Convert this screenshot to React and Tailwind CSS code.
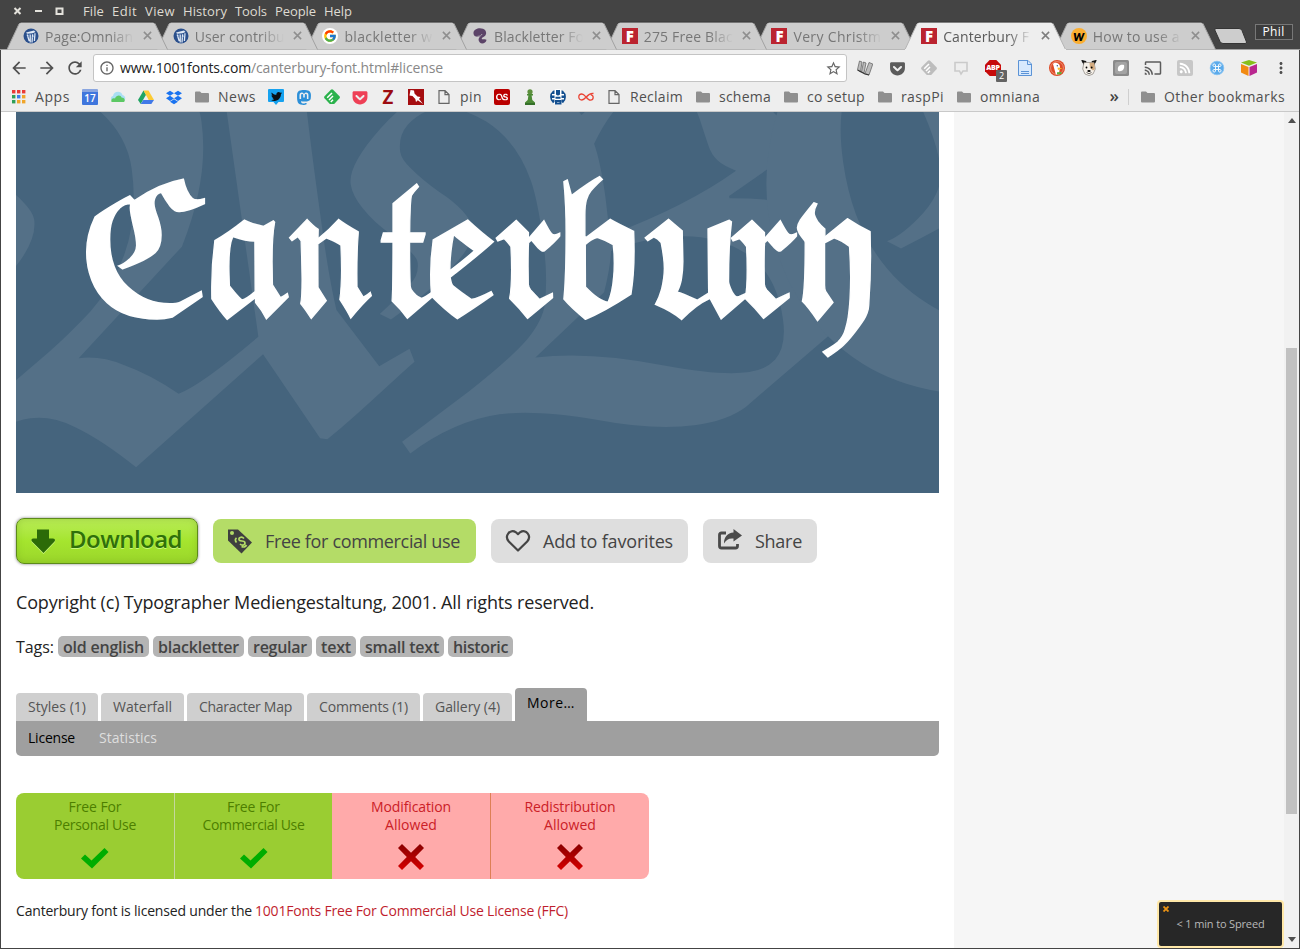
import React, { useLayoutEffect, useRef } from "react";
import { FaDropbox, FaMastodon, FaGetPocket, FaTwitter, FaLastfm, FaRss } from "react-icons/fa";
import { FcGoogle } from "react-icons/fc";
import {
  MdArrowBack,
  MdArrowForward,
  MdRefresh,
  MdInfoOutline,
  MdStarBorder,
  MdCast,
  MdMoreVert,
} from "react-icons/md";

/* Label whose letter spacing is adjusted so that it fills an exact width. */
function Label({ w, className = "", children }) {
  const ref = useRef(null);
  useLayoutEffect(() => {
    const el = ref.current;
    const inner = el.firstChild;
    inner.style.letterSpacing = "0px";
    const natural = inner.getBoundingClientRect().width;
    inner.style.letterSpacing = `${(w - natural) / inner.textContent.length}px`;
    el.style.width = `${w}px`;
  }, [w, children]);
  return (
    <span ref={ref} className={`inline-block shrink-0 whitespace-nowrap ${className}`}>
      <span>{children}</span>
    </span>
  );
}

/* ---------- favicons ---------- */

const Wikisource = () => (
  <svg viewBox="0 0 16 16" className="size-4">
    <circle cx="8" cy="8" r="7.500" fill="#2a4f8c" />
    <path d="M3 4.500 L7 3.600 L11 2.500 L12.500 4 L9.500 5.200 L4 5.800 Z" fill="#dfe9f5" />
    <path d="M4.200 6.500 L6.200 13 M7.200 6.500 V14.600 M9.600 6.200 L9 14.500 M12 5.200 L11.400 13" stroke="#dfe9f5" strokeWidth="1.300" fill="none" />
    <path d="M4.500 9 L6 6.500 M9.500 10 L11.500 6.500" stroke="#8fb0dc" strokeWidth=".8" />
  </svg>
);
const Google = () => (
  <span className="flex size-4 items-center justify-center rounded-full bg-white">
    <FcGoogle size={14} />
  </span>
);
const Purple = () => (
  <svg viewBox="0 0 16 16" className="size-4">
    <path d="M1.500 4.500 C2 1 7 -.8 11 .8 C15 2.500 14.800 6.500 12.500 8.300 C10.500 9.600 9.200 10 10 11.200 C11.500 11.500 13.500 10.800 14.500 12 C14 15 10 16.500 7.800 14.500 C5.500 12 6.800 9.600 8.500 8.200 C5 9.500 1 8.500 1.500 4.500 Z" fill="#5c4468" />
    <path d="M5.500 8.300 C8 8.300 9.500 7.500 10 6" stroke="#cdcdcd" strokeWidth=".7" fill="none" />
  </svg>
);
const FontsF = () => (
  <span className="flex size-4 items-center justify-center bg-[#bb2430] font-['Open_Sans',sans-serif] text-[15px] leading-4 font-extrabold text-white">
    F
  </span>
);
const Wiki = () => (
  <span className="flex size-4 items-center justify-center rounded-full bg-[#fbae30] pb-0.5 font-['Lato',sans-serif] text-[15px] leading-4 font-black text-black italic">
    w
  </span>
);

/* ---------- browser tabs ---------- */

const tabs = [
  { icon: <Wikisource />, title: "Page:Omnian", w: 88, z: "z-[8]" },
  { icon: <Wikisource />, title: "User contribu", w: 90, z: "z-[7]" },
  { icon: <Google />, title: "blackletter w", w: 88, z: "z-[6]" },
  { icon: <Purple />, title: "Blackletter Fo", w: 90, z: "z-[5]" },
  { icon: <FontsF />, title: "275 Free Blac", w: 89, z: "z-[4]" },
  { icon: <FontsF />, title: "Very Christm", w: 88, z: "z-[3]" },
  { icon: <FontsF />, title: "Canterbury F", w: 86, z: "z-[9]", active: true },
  { icon: <Wiki />, title: "How to use a", w: 87, z: "z-[1]" },
];

function Tab({ icon, title, w, z, active }) {
  return (
    <div className={`relative h-7 w-[149.700px] shrink-0 ${z}`}>
      <svg viewBox="0 0 162 28" className="absolute top-0 left-0 h-7 w-[162px] overflow-visible">
        <path
          d="M0 27.5 L12 2 Q13 .5 14.5 .5 H146 Q147.500 .5 148.200 2 L160.500 27.500"
          fill={active ? "#eeeeee" : "#cdcdcd"}
          stroke={active ? "#b5b5b5" : "#a2a2a2"}
        />
        <path d="M12.500 1 Q13 0 14.500 0 H146 L148 1" fill="none" stroke="#343434" strokeWidth=".8" />
        <path d={active ? "M0 27.800 H161" : ""} stroke="#eeeeee" strokeWidth="1.500" />
      </svg>
      <div className="relative flex h-[27px] items-center pl-4">
        {icon}
        <div className="ml-[6px] w-[90px] [mask-image:linear-gradient(to_right,black_72%,transparent_99%)]">
          <Label w={w} className={`text-[14px] leading-5 ${active ? "text-[#5a5a5a]" : "text-[#777]"}`}>
            {title}
          </Label>
        </div>
        <svg viewBox="0 0 10 10" className="ml-[8px] size-[9px]">
          <path d="M1 1 L9 9 M9 1 L1 9" stroke={active ? "#7e7e7e" : "#8f8f8f"} strokeWidth="1.700" />
        </svg>
      </div>
    </div>
  );
}

/* ---------- bookmark icons ---------- */

const Apps = () => (
  <svg viewBox="0 0 16 16" className="size-4">
    {["#ea3b36", "#ea3b36", "#ea3b36", "#2f9f58", "#3b7ded", "#f0a52a", "#2f9f58", "#f0a52a", "#f0a52a"].map((c, i) => (
      <rect key={i} x={1 + (i % 3) * 5} y={1 + Math.floor(i / 3) * 5} width="3.400" height="3.400" fill={c} />
    ))}
  </svg>
);
const Calendar = () => (
  <span className="flex size-4 items-end justify-center rounded-[1px] border-t-[3px] border-[#8aa6e0] bg-[#3f76dd] text-[10px] leading-[13px] font-semibold text-white">
    17
  </span>
);
const Cloud = () => (
  <svg viewBox="0 0 16 16" className="size-4">
    <path d="M3 12 C0 11 .5 7.500 3 7 C3.500 2 11 1 12.500 6 C16 7 16 11 13.500 12 Z" fill="#a9dff3" />
    <path d="M1.500 13 C.5 10 3 8.500 5 9.500 C6.500 5.500 11 6 11.500 8.500 C15 8.500 15.500 12 14 13 Z" fill="#5cc864" />
  </svg>
);
const Drive = () => (
  <svg viewBox="0 0 16 16" className="size-4">
    <path d="M5.500 1.500 L0 11 L2.700 15 L8 5.800 Z" fill="#1fa463" />
    <path d="M5.500 1.500 H10.500 L16 11 H10.700 Z" fill="#fccb34" />
    <path d="M5.300 11 H16 L13.300 15 H2.700 Z" fill="#4179e8" />
  </svg>
);
const Folder = () => (
  <svg viewBox="0 0 16 16" className="size-4">
    <path d="M1 3.500 Q1 2.500 2 2.500 H6 L7.500 4 H14 Q15 4 15 5 V12.500 Q15 13.500 14 13.500 H2 Q1 13.500 1 12.500 Z" fill="#8f8f8f" />
  </svg>
);
const Twitter = () => (
  <span className="relative flex size-4 items-start justify-center pt-[1.500px]">
    <svg viewBox="0 0 16 16" className="absolute inset-0 size-4">
      <path d="M1 0 H15 Q16 0 16 1 V12 Q16 13 15 13 H10.500 L8 16 L5.500 13 H1 Q0 13 0 12 V1 Q0 0 1 0 Z" fill="#16a2ef" />
    </svg>
    <FaTwitter size={11} color="#0a0f14" className="relative" />
  </span>
);
const FeedMark = ({ fill, size = 16 }) => (
  <svg viewBox="0 0 16 16" width={size} height={size}>
    <path d="M6.900 .7 Q8 -.3 9.100 .7 L15.500 7.300 Q16.400 8.300 15.500 9.300 L10.200 15 H5.800 L.5 9.300 Q-.4 8.300 .5 7.300 Z" fill={fill} />
    <path d="M3.200 8.800 L8 4 M5 11 L9 7 M6.800 13 L9 10.800" stroke="#fff" strokeWidth="1.500" />
  </svg>
);
const RedPin = () => (
  <svg viewBox="0 0 16 16" className="size-4">
    <rect width="16" height="16" fill="#a50d10" />
    <path d="M2.500 1 L6 1.500 L6.500 4.500 L9.500 7.500 L12.500 8 L11 10 L15 15 L9.800 11.200 L8 13 L7.300 10 L4.500 7 L1.500 6.500 Z" fill="#fff" />
  </svg>
);
const Zed = () => (
  <span className="flex size-4 items-center justify-center font-['Lato',sans-serif] text-[18px] leading-4 font-black text-[#9c0b10]">Z</span>
);
const Doc = () => (
  <svg viewBox="0 0 16 16" className="size-4" fill="none" stroke="#666" strokeWidth="1.200">
    <path d="M3 1.600 H9 L13 5.600 V14.400 H3 Z M9 1.600 V5.600 H13" />
  </svg>
);
const Last = () => (
  <span className="flex size-4 items-center justify-center rounded-[2px] bg-[#ba0000] text-white">
    <FaLastfm size={12} />
  </span>
);
const Chess = () => (
  <svg viewBox="0 0 16 16" className="size-4">
    <circle cx="8" cy="2.800" r="2.600" fill="#5c8f3c" />
    <path d="M5 5 H11 V6.500 H9.600 L10.300 11 L13 13.500 V16 H3 V13.500 L5.700 11 L6.400 6.500 H5 Z" fill="#4c8a36" />
    <path d="M3 14 H13 V16 H3 Z" fill="#35702a" />
  </svg>
);
const BlueDisc = () => (
  <svg viewBox="0 0 16 16" className="size-4">
    <circle cx="8" cy="8" r="8" fill="#fff" />
    <path d="M3 1.800 A8 8 0 0 0 3 14.200 L4.500 13 V10.500 H2 V9 H4.500 V6.500 H2 V5 H4.500 V1.200 Z M13 1.800 A8 8 0 0 1 13 14.200 L11.500 13 V10.500 H14 V9 H11.500 V6.500 H14 V5 H11.500 V1.200 Z" fill="#134f8f" />
    <path d="M5.500 8.800 H10.500 M6 12 H10.500 V14.500 H6 Z" fill="none" stroke="#134f8f" strokeWidth="2" />
    <path d="M6 1 H10 V5.500 Q8 7.500 6 5.500 Z" fill="#134f8f" />
  </svg>
);
const Loop = () => (
  <svg viewBox="0 0 16 16" className="size-4">
    <path d="M15.500 4.500 C12 4 10 6 8 8.300 C6.500 10 5.500 11 3.800 11 C-.2 11 -.2 5 3.800 5 C5.500 5 6.500 6.300 8 8 C9.500 9.800 10.700 11.200 12.500 11.200 C16 11.200 16 6 12.800 5.800" fill="none" stroke="#ea4435" strokeWidth="1.300" />
  </svg>
);

const bookmarks = [
  [<Apps />, "Apps", 35],
  [<Calendar />],
  [<Cloud />],
  [<Drive />],
  [<FaDropbox size={17} color="#1a73f0" />],
  [<Folder />, "News", 38],
  [<Twitter />],
  [<FaMastodon size={17} color="#2b8fd8" />],
  [<FeedMark fill="#2bb24c" />],
  [<FaGetPocket size={17} color="#ee4056" />],
  [<Zed />],
  [<RedPin />],
  [<Doc />, "pin", 22],
  [<Last />],
  [<Chess />],
  [<BlueDisc />],
  [<Loop />],
  [<Doc />, "Reclaim", 53],
  [<Folder />, "schema", 52],
  [<Folder />, "co setup", 58],
  [<Folder />, "raspPi", 43],
  [<Folder />, "omniana", 60],
];

function Bookmark({ icon, text, w }) {
  return (
    <div className="flex shrink-0 items-center gap-2">
      <span className="flex size-4 items-center justify-center">{icon}</span>
      {text && (
        <Label w={w} className="text-[14px] leading-5 text-[#505050]">
          {text}
        </Label>
      )}
    </div>
  );
}

/* ---------- extension icons ---------- */

const extensions = [
  <svg viewBox="0 0 16 16" className="size-4">
    <path d="M2.500 1 L5 2 L3.500 12 L.5 9.500 Z M6.500 2 L9 3 L7 13 L4.500 12 Z M12 2.500 L15.800 4 L12 15 L8 13.500 Z" fill="#bcbcbc" stroke="#6a6a6a" strokeWidth=".8" />
    <path d="M.5 10 L8 14 L12 15" stroke="#333" strokeWidth="1.200" fill="none" />
  </svg>,
  <FaGetPocket size={17} color="#5b5b5b" />,
  <FeedMark fill="#bdbdbd" />,
  <svg viewBox="0 0 16 16" className="size-4" fill="none" stroke="#cacaca" strokeWidth="1.600">
    <path d="M2 2.500 H14 V11 H10 L8 14 L6.500 11 H2 Z" />
  </svg>,
  <span className="relative flex size-4 items-center justify-center">
    <svg viewBox="0 0 16 16" className="absolute inset-0 size-4">
      <path d="M4.700 0 H11.300 L16 4.700 V11.300 L11.300 16 H4.700 L0 11.300 V4.700 Z" fill="#c60a0a" />
    </svg>
    <span className="relative font-['Open_Sans',sans-serif] text-[7px] leading-4 font-extrabold tracking-[-0.2px] text-white">ABP</span>
    <span className="absolute top-[10px] left-[11px] flex h-3 w-[11px] items-center justify-center rounded-[1px] bg-[#636363] text-[9px] leading-3 text-white">2</span>
  </span>,
  <svg viewBox="0 0 16 16" className="size-4" fill="#d7e9fd" stroke="#5b93d6">
    <path d="M1.500 .5 H11 L14.500 4 V15.500 H1.500 Z" />
    <path d="M10.500 .5 V4.500 H14.500 M4 11.500 H12 M4 13.500 H12" fill="none" />
  </svg>,
  <svg viewBox="0 0 16 16" className="size-4">
    <circle cx="8" cy="8" r="8" fill="#de4a26" />
    <circle cx="8" cy="8" r="6.400" fill="none" stroke="#f3b8a6" strokeWidth=".6" />
    <path d="M4 4 C5.500 1.800 10.500 2.500 11 6.500 L10 14 C9 14.600 7.500 14.500 6.800 14.200 Z" fill="#fff" />
    <path d="M8.500 7.500 L13.500 8.200 L9 10 Z" fill="#fbb829" />
    <path d="M8 12.300 L12.500 12 V14 L8 14.500 Z" fill="#5eae3c" />
    <circle cx="8.300" cy="5.800" r=".7" fill="#2d4f8f" />
  </svg>,
  <svg viewBox="0 0 16 16" className="size-4">
    <path d="M.8 .5 L5 1.500 L3.500 5.500 Z M15.200 .5 L11 1.500 L12.500 5.500 Z" fill="#111" stroke="#111" />
    <path d="M3 2.500 H13 L14.300 9 L12 14 L8 15.600 L4 14 L1.700 9 Z" fill="#f6f1ea" stroke="#77706a" strokeWidth=".6" />
    <path d="M8.500 2.700 H13 L14 9 L12 10.500 L9 8 Z" fill="#d3ab7f" />
    <circle cx="5.500" cy="7.500" r=".9" />
    <circle cx="10.700" cy="7.500" r=".9" />
    <ellipse cx="8" cy="11" rx="1.700" ry="1.100" />
    <path d="M5.500 12.500 Q8 15 10.500 12.500" stroke="#333" fill="none" strokeWidth=".7" />
  </svg>,
  <svg viewBox="0 0 16 16" className="size-4">
    <rect width="16" height="16" rx="1.500" fill="#8a8a8a" />
    <rect x="2" y="2" width="12" height="12" rx="2" fill="#a3a3a3" />
    <path d="M5 10.500 C4 6.500 7 4 11 5 C12 9 9 12 5.500 11 Z" fill="#fff" />
  </svg>,
  <MdCast size={18} color="#5c5c5c" />,
  <span className="flex size-4 items-center justify-center rounded-[2px] bg-[#c7c7c7] text-white">
    <FaRss size={12} />
  </span>,
  <svg viewBox="0 0 16 16" className="size-4">
    <circle cx="8" cy="8" r="7" fill="#5cabeb" />
    <circle cx="8" cy="8" r="6.800" fill="none" stroke="#92c8f2" strokeWidth=".8" />
    <path d="M6.500 6.500 H9.500 V9.500 H6.500 Z M6.500 6.500 V5 A1.300 1.300 0 1 0 5.200 6.500 Z M9.500 6.500 H11 A1.300 1.300 0 1 0 9.500 5 Z M9.500 9.500 V11 A1.300 1.300 0 1 0 11 9.500 Z M6.500 9.500 H5 A1.300 1.300 0 1 0 6.500 11 Z" fill="none" stroke="#fff" strokeWidth=".9" />
  </svg>,
  <svg viewBox="0 0 16 16" className="size-4">
    <path d="M0 2.500 L8 0 L16 2.500 L8 5.800 Z" fill="#86bf1a" />
    <path d="M0 4 L7.500 7 V16 L0 12.500 Z" fill="#f18a12" />
    <path d="M16 4 L8.500 7 V16 L16 12.500 Z" fill="#b9268f" />
  </svg>,
  <MdMoreVert size={18} color="#4f4f4f" />,
];

/* ---------- page parts ---------- */

/* Specimen letters: glyph, left edge, set width. */
const specimen = [
  ["𝕮", 58, 143],
  ["𝖆", 185, 98],
  ["𝖓", 264, 101],
  ["𝖙", 355, 72],
  ["𝖊", 402, 88],
  ["𝖗", 470, 84],
  ["𝖇", 536, 94],
  ["𝖚", 617, 128],
  ["𝖗", 705, 86],
  ["𝖞", 770, 96],
];

function Banner() {
  return (
    <svg viewBox="0 0 923 381" className="block h-[381px] w-[923px] overflow-hidden bg-[#45647d]" role="img" aria-label="Canterbury">
      <g fill="#547087" fontFamily="'DejaVu Math TeX Gyre', serif">
        <text transform="translate(-120 370) rotate(-8)" fontSize="540">𝕬</text>
        <text transform="translate(335 345) rotate(-8)" fontSize="470">𝕭</text>
        <text transform="translate(735 300) rotate(-8)" fontSize="560">𝕮</text>
      </g>
      <text y="201" fill="#fff" stroke="#fff" strokeWidth="1.500" fontSize="175" fontFamily="'DejaVu Math TeX Gyre', serif">
        {specimen.map(([ch, x, w], i) => (
          <tspan key={i} x={x} textLength={w} lengthAdjust="spacingAndGlyphs">{ch}</tspan>
        ))}
      </text>
    </svg>
  );
}

const tags = [
  ["old english", 81],
  ["blackletter", 81],
  ["regular", 54],
  ["text", 30],
  ["small text", 74],
  ["historic", 55],
];

const sections = [
  ["Styles (1)", 58],
  ["Waterfall", 59],
  ["Character Map", 93],
  ["Comments (1)", 89],
  ["Gallery (4)", 65],
];

const rights = [
  { lines: [["Free For", 53], ["Personal Use", 82]], ok: true, cls: "rounded-l-lg" },
  { lines: [["Free For", 53], ["Commercial Use", 102]], ok: true, cls: "border-l border-[#c5d79d]" },
  { lines: [["Modification", 80], ["Allowed", 52]], ok: false, cls: "" },
  { lines: [["Redistribution", 91], ["Allowed", 52]], ok: false, cls: "rounded-r-lg border-l border-[#dd7f55]" },
];

export default function App() {
  return (
    <div className="relative flex h-[949px] w-[1300px] flex-col overflow-hidden bg-[#444] font-['Open_Sans',sans-serif]">
      <div className="flex h-[22px] shrink-0 items-center pl-[13px]">
        <svg viewBox="0 0 52 10" className="h-[10px] w-[52px]" fill="none" stroke="#e4e2dc" strokeWidth="2">
          <path d="M1.500 2 L7.500 8 M7.500 2 L1.500 8 M22 5 H29" />
          <path d="M43.500 2.500 H49.500 V8 H43.500 Z" />
        </svg>
        <div className="ml-[18px] flex gap-2 text-[13px] leading-5 text-[#dfdbd2]">
          <Label w={21}>File</Label>
          <Label w={25}>Edit</Label>
          <Label w={30}>View</Label>
          <Label w={44}>History</Label>
          <Label w={32}>Tools</Label>
          <Label w={41}>People</Label>
          <Label w={28}>Help</Label>
        </div>
      </div>

      <div className="flex h-7 shrink-0 border-b border-[#a2a2a2] pl-[7px]">
        {tabs.map((t) => (
          <Tab key={t.title} {...t} />
        ))}
        <svg viewBox="0 0 34 17" className="mt-[6px] ml-[9px] h-[17px] w-[34px] shrink-0">
          <path d="M2 .5 H25 Q27 .5 28 2.500 L32.500 14 Q33 15.500 31 15.500 H9 Q7 15.500 6 13.500 L.8 2 Q.5 .5 2 .5 Z" fill="#cdcdcd" stroke="#353535" />
        </svg>
        <div className="mt-[2px] ml-[7px] flex h-4 w-[38px] items-center justify-center border border-[#777] bg-[#3c3c3c] text-[12px] text-white">
          <Label w={22}>Phil</Label>
        </div>
      </div>

      <div className="mx-px flex min-h-0 flex-1 flex-col bg-white">
        <div className="flex h-[62px] shrink-0 flex-col border-b border-[#c9c9c9] bg-[#eeeeee]">
          <div className="flex h-[36px] items-center pl-[8px]">
            <MdArrowBack size={20} color="#505050" />
            <MdArrowForward size={20} color="#505050" className="ml-[8px]" />
            <MdRefresh size={20} color="#505050" className="ml-[8px]" />
            <div className="ml-[8px] flex h-7 w-[754px] items-center rounded-[3px] border border-[#c4c4c4] bg-white pl-[5px]">
              <MdInfoOutline size={16} color="#666" />
              <div className="ml-[5px] flex text-[14px] leading-5 text-[#222]">
                <Label w={131}>www.1001fonts.com</Label>
                <Label w={192} className="text-[#888]">/canterbury-font.html#license</Label>
              </div>
              <MdStarBorder size={17} color="#666" className="ml-auto mr-1" />
            </div>
            <div className="ml-[2px] flex">
              {extensions.map((e, i) => (
                <span key={i} className="flex h-5 w-8 items-center justify-center">
                  {e}
                </span>
              ))}
            </div>
          </div>
          <div className="flex h-[22px] items-center gap-3 pl-[10px]">
            {bookmarks.map(([icon, text, w], i) => (
              <Bookmark key={i} icon={icon} text={text} w={w} />
            ))}
            <div className="ml-auto flex items-center pr-[14px]">
              <span className="pb-0.5 text-[17px] leading-5 font-semibold text-[#444]">»</span>
              <span className="mr-[11px] ml-[9px] h-4 w-px bg-[#cfcfcf]" />
              <Bookmark icon={<Folder />} text="Other bookmarks" w={121} />
            </div>
          </div>
        </div>

        <div className="flex min-h-0 flex-1">
          <main className="flex w-[953px] shrink-0 flex-col pl-[15px]">
            <Banner />

            <div className="mt-[25px] flex h-[46px] items-center text-[18px] text-[#444]">
              <div className="flex h-[46px] w-[182px] items-center rounded-lg border border-[#5d8a1b] bg-linear-to-b from-[#b9ec55] via-[#a5e52e] to-[#9bd62b] pl-[14px] shadow-[0_0_3px_rgba(0,0,0,.5),inset_0_0_7px_rgba(90,140,20,.3)]">
                <svg viewBox="0 0 24 26" className="h-[26px] w-6 drop-shadow-[0_1px_0_#c9f67d]">
                  <path d="M6 1.500 H18 V10.500 H22 Q25 11 23.500 13.500 L12.500 25 L1 13.500 Q-.5 11 2 10.500 H6 Z" fill="#2c6b08" />
                </svg>
                <Label w={113} className="ml-[14px] pb-1 text-[24px] leading-8 font-semibold text-[#2f7009] [text-shadow:0_1px_0_#c9f67d]">
                  Download
                </Label>
              </div>
              <div className="ml-[15px] flex h-11 w-[263px] items-center rounded-lg bg-[#b4dc67] pl-[14px]">
                <svg viewBox="0 0 26 26" className="size-[26px]">
                  <path d="M1 1.500 H11 L25 14.500 L14.500 25.500 L1 12.500 Z" fill="#3f3f3f" />
                  <circle cx="5" cy="5" r="2" fill="#b4dc67" />
                  <path d="M17 10.500 C14.500 7.800 11 9.800 12.200 12 C13.500 14 16.700 12 17.800 14.200 C18.600 16.600 15.500 18.400 13 16 M9.500 9.800 C8 11 8 12.500 9.500 14.500 M14.500 18.500 C16.500 19.500 18.500 19 19.500 17" fill="none" stroke="#b4dc67" strokeWidth="1.700" />
                </svg>
                <Label w={195} className="ml-3">Free for commercial use</Label>
              </div>
              <div className="ml-[15px] flex h-11 w-[197px] items-center rounded-lg bg-[#dedede] pl-[14px]">
                <svg viewBox="0 0 26 24" className="h-6 w-[26px]">
                  <path d="M13 21.500 L3.800 12.500 C-1 7 5 -.8 11 3.300 L13 5.200 L15 3.300 C21 -.8 27 7 22.200 12.500 Z" fill="none" stroke="#444" strokeWidth="2.200" strokeLinejoin="round" />
                </svg>
                <Label w={130} className="ml-3">Add to favorites</Label>
              </div>
              <div className="ml-[15px] flex h-11 w-[114px] items-center rounded-lg bg-[#dedede] pl-[14px]">
                <svg viewBox="0 0 26 22" className="mb-[2px] h-[22px] w-[26px]">
                  <path d="M9 4 H4.500 Q2.500 4 2.500 6 V17 Q2.500 19 4.500 19 H18.500 Q20.500 19 20.500 17 V15" fill="none" stroke="#4a4a4a" strokeWidth="2.800" />
                  <path d="M16.500 0 L25 6.500 L16.500 12.500 V9.500 C12 9 9.500 10.500 7 14.500 C7 8 10.500 4 16.500 3.600 Z" fill="#4a4a4a" />
                </svg>
                <Label w={47} className="ml-3">Share</Label>
              </div>
            </div>

            <p className="mt-[24px] h-7 text-[18px] leading-7 text-[#222]">
              <Label w={578}>Copyright (c) Typographer Mediengestaltung, 2001. All rights reserved.</Label>
            </p>

            <div className="mt-[20px] flex h-[21px] items-center gap-1 text-[16px] leading-[22px] text-[#222]">
              <Label w={38}>Tags:</Label>
              {tags.map(([t, w]) => (
                <span key={t} className="flex h-[21px] items-start rounded-[5px] bg-[#b4b4b4] px-[5px] font-semibold text-[#444]">
                  <Label w={w}>{t}</Label>
                </span>
              ))}
            </div>

            <div className="mt-[31px] flex h-[33px] items-end gap-[3px] text-[14px] leading-7 text-[#555]">
              {sections.map(([t, w]) => (
                <span key={t} className="flex h-7 rounded-t-[4px] bg-[#cfcfcf] px-3">
                  <Label w={w}>{t}</Label>
                </span>
              ))}
              <span className="flex h-[33px] w-[72px] rounded-t-[4px] bg-[#9f9f9f] px-3 pt-px text-black">
                <Label w={48}>More…</Label>
              </span>
            </div>
            <div className="flex h-[35px] w-[923px] gap-6 rounded-b-[5px] bg-[#9f9f9f] pl-3 text-[14px] leading-[34px] text-black">
              <Label w={47}>License</Label>
              <Label w={58} className="text-[#dedede]">Statistics</Label>
            </div>

            <div className="mt-[37px] grid h-[86px] w-[633px] grid-cols-[158px_158px_158px_159px]">
              {rights.map(({ lines, ok, cls }, i) => (
                <div
                  key={i}
                  className={`flex flex-col items-center pt-[5px] text-[14px] leading-[18px] ${
                    ok ? "bg-[#9acd32] text-[#4d7f00]" : "bg-[#ffaaaa] text-[#cb2027]"
                  } ${cls}`}
                >
                  {lines.map(([t, w]) => (
                    <Label key={t} w={w}>{t}</Label>
                  ))}
                  {ok ? (
                    <svg viewBox="0 0 30 22" className="mt-[13px] h-[22px] w-[30px]">
                      <path d="M1 11.500 L5 7.500 L11.500 13.500 L24.500 1 L28.500 5 L12 21.500 Z" fill="#00ad00" />
                    </svg>
                  ) : (
                    <svg viewBox="0 0 28 28" className="mt-[9px] size-7">
                      <defs>
                        <linearGradient id={`cross${i}`} x1="0" y1="0" x2="0" y2="1">
                          <stop offset="0" stopColor="#880000" />
                          <stop offset="1" stopColor="#d60000" />
                        </linearGradient>
                      </defs>
                      <path d="M5 1 L14 9.800 L23 1 L27 5 L18.200 14 L27 23 L23 27 L14 18.200 L5 27 L1 23 L9.800 14 L1 5 Z" fill={`url(#cross${i})`} />
                    </svg>
                  )}
                </div>
              ))}
            </div>

            <p className="mt-[22px] flex gap-[3px] text-[14px] leading-5 text-[#222]">
              <Label w={236}>Canterbury font is licensed under the</Label>
              <Label w={313} className="text-[#bf1e2e]">1001Fonts Free For Commercial Use License (FFC)</Label>
            </p>
          </main>

          <aside className="flex-1 bg-[#f6f6f6]" />

          <div className="flex w-[15px] flex-col items-center bg-[#f1f1f1]">
            <svg viewBox="0 0 8 5" className="mt-[6px] h-[5px] w-2">
              <path d="M0 5 L4 0 L8 5 Z" fill="#505050" />
            </svg>
            <div className="mt-[225px] h-[466px] w-[11px] bg-[#c1c1c1]" />
            <svg viewBox="0 0 8 5" className="mt-auto mb-[6px] h-[5px] w-2">
              <path d="M0 0 L4 5 L8 0 Z" fill="#505050" />
            </svg>
          </div>
        </div>
      </div>
      <div className="h-px shrink-0 bg-[#444]" />

      <div className="absolute top-[900px] left-[1157px] flex h-[48px] w-[127px] items-center justify-center rounded-[4px] border-2 border-[#ffe8a8] bg-[#272727] text-[11px] text-[#b9b9b9]">
        <svg viewBox="0 0 6 6" className="absolute top-[4px] left-[4px] size-[6px]">
          <path d="M.5 .5 L5.500 5.500 M5.500 .5 L.5 5.500" stroke="#ee9413" strokeWidth="1.800" />
        </svg>
        <Label w={88}>&lt; 1 min to Spreed</Label>
      </div>
    </div>
  );
}
